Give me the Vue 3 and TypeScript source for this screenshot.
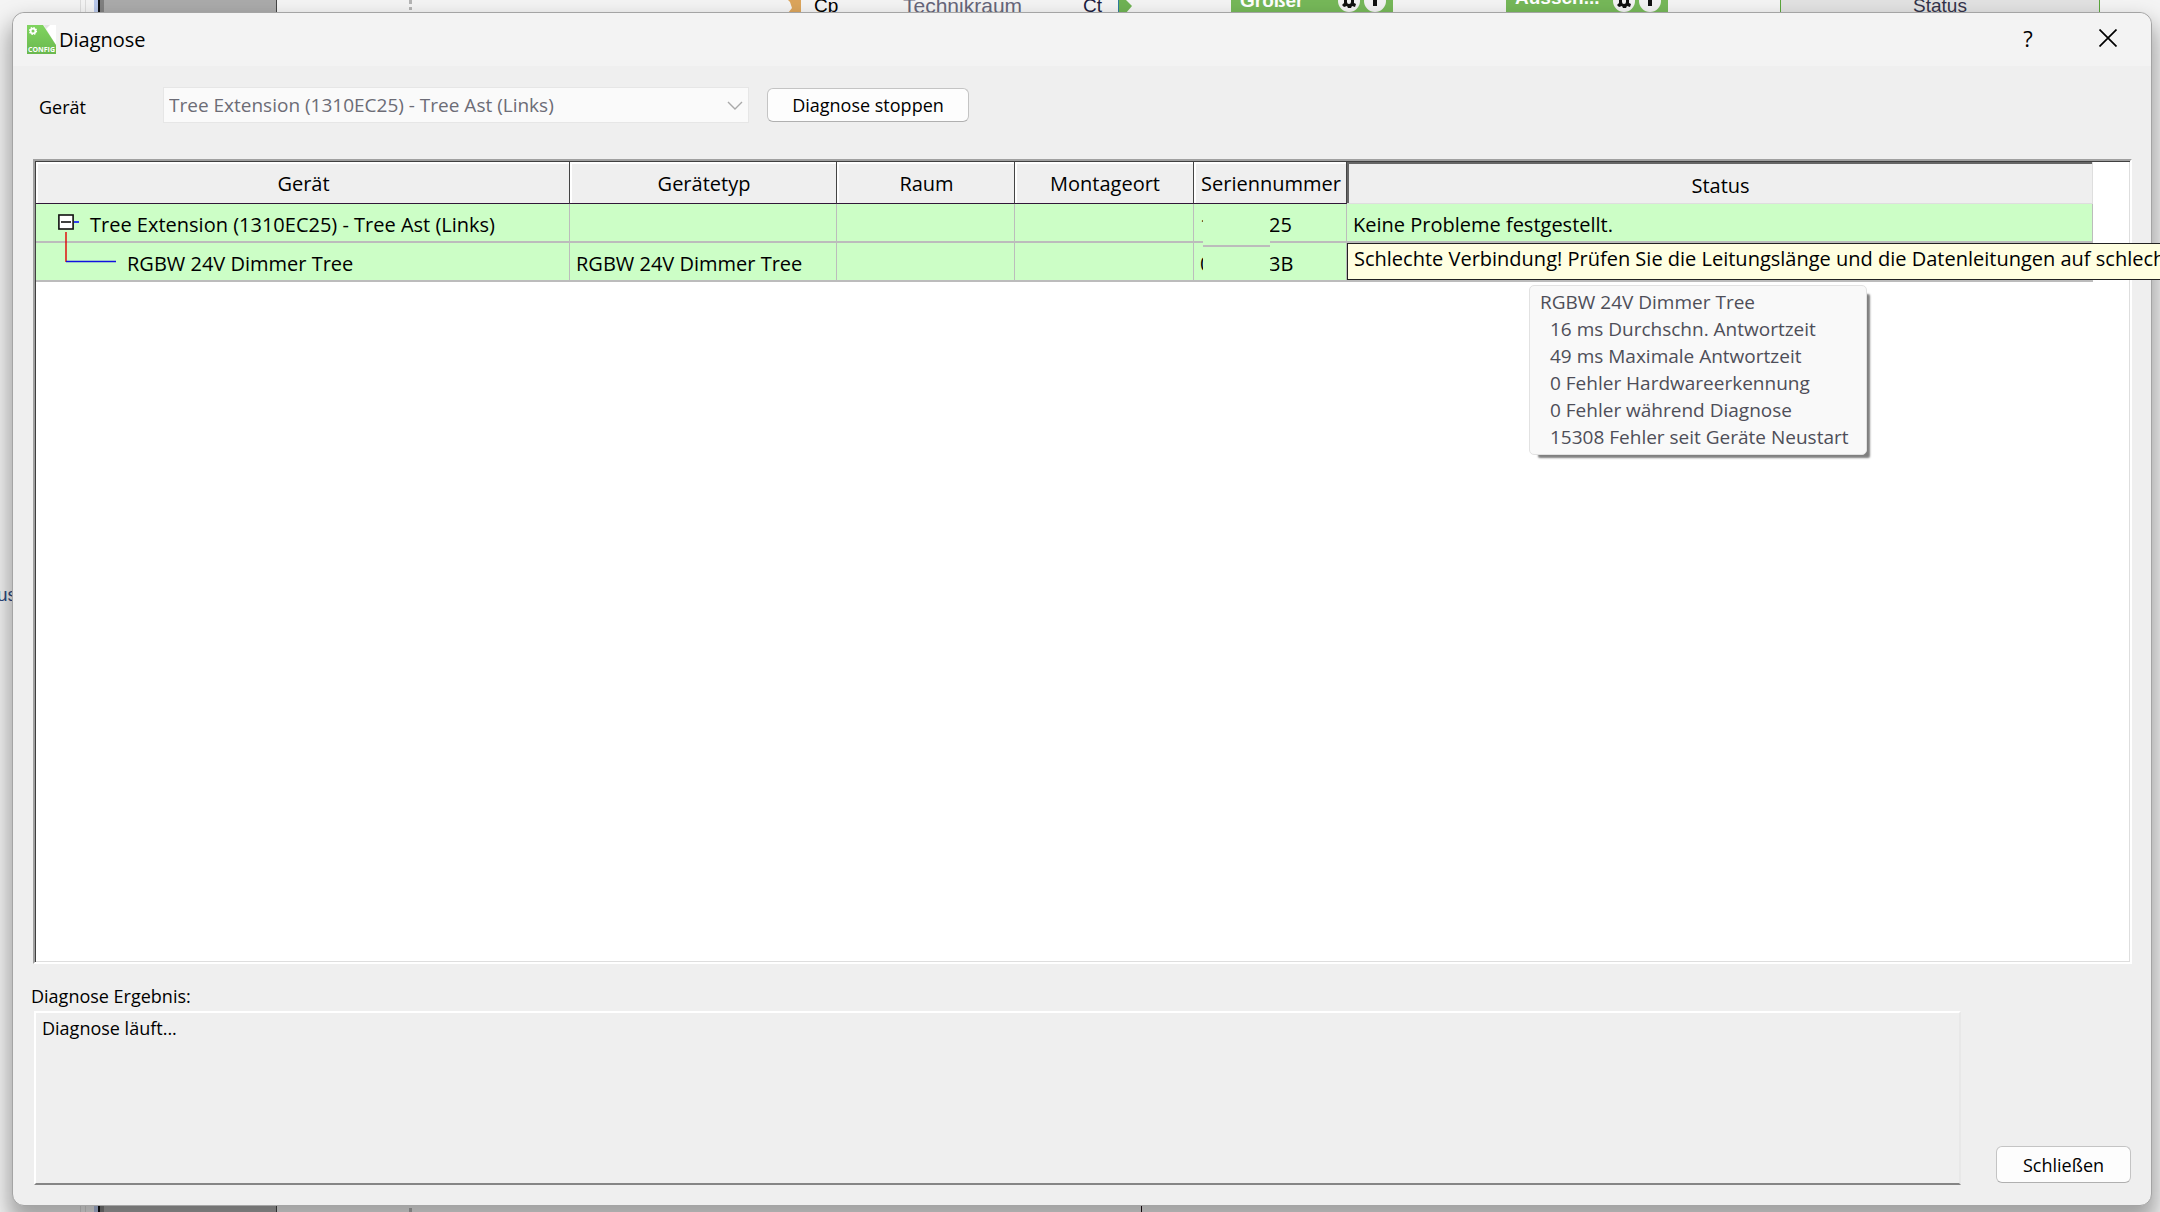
<script setup lang="ts">
import { ref } from 'vue'

interface DeviceRow {
  name: string
  type: string
  room: string
  place: string
  serialStart: string
  serialEnd: string
  status: string
}

const columns = ['Gerät', 'Gerätetyp', 'Raum', 'Montageort', 'Seriennummer', 'Status']
const device = ref('Tree Extension (1310EC25) - Tree Ast (Links)')
const result = ref('Diagnose läuft...')

const rows: DeviceRow[] = [
  {
    name: 'Tree Extension (1310EC25) - Tree Ast (Links)',
    type: '',
    room: '',
    place: '',
    serialStart: '1',
    serialEnd: '25',
    status: 'Keine Probleme festgestellt.',
  },
  {
    name: 'RGBW 24V Dimmer Tree',
    type: 'RGBW 24V Dimmer Tree',
    room: '',
    place: '',
    serialStart: '0',
    serialEnd: '3B',
    status: '',
  },
]

const hint = 'Schlechte Verbindung! Prüfen Sie die Leitungslänge und die Datenleitungen auf schlechte Kontakte.'
const details = [
  '16 ms Durchschn. Antwortzeit',
  '49 ms Maximale Antwortzeit',
  '0 Fehler Hardwareerkennung',
  '0 Fehler während Diagnose',
  '15308 Fehler seit Geräte Neustart',
]
const blocks = [
  { id: 'compare', label: 'Größer' },
  { id: 'switch', label: 'Aussch...' },
]
</script>

<template>
  <div class="desktop">
    <!-- Planning canvas behind the dialog -->
    <div class="canvas">
      <span class="line pane-edge"></span>
      <span class="line pane-blue"></span>
      <span class="sheet"></span>
      <span class="line dotted"></span>
      <span class="line wire"></span>
      <span class="side-word">us</span>
      <svg class="tag tag-in" viewBox="0 0 13 13"><path d="M0 0H13V13H0L4 8L2 2Z" fill="#dca55c" /></svg>
      <span class="word cp">Cp</span>
      <span class="word room">Technikraum</span>
      <span class="word ct">Ct</span>
      <svg class="tag tag-out" viewBox="0 0 14 13"><path d="M0 0H8L14 6L8 13H0Z" fill="#6fb353" /><path d="M0 0V13" stroke="#2f7d9c" stroke-width="2" /></svg>
      <div v-for="b in blocks" :key="b.id" class="block" :class="b.id">
        <span class="block-label">{{ b.label }}</span>
        <svg class="badges" viewBox="0 0 50 13">
          <circle cx="12" cy="1" r="11" fill="#f2f2f2" />
          <circle cx="38" cy="1" r="11" fill="#f2f2f2" />
          <path d="M7 0V3L5 5L7 7L10 6L11 8H14L15 6L18 7L19 4L17 3V0H14V2A2 2 0 0 1 10 2V0Z" fill="#111" />
          <path d="M36 0H40V6H36Z" fill="#111" />
        </svg>
      </div>
      <div class="status-block">Status</div>
    </div>

    <main class="dialog">
      <header class="titlebar">
        <svg class="logo" viewBox="0 0 29 29">
          <defs>
            <linearGradient id="leaf" x1="0" y1="0" x2="0" y2="1">
              <stop offset="0" stop-color="#80d45f" />
              <stop offset="1" stop-color="#6ab84f" />
            </linearGradient>
          </defs>
          <path d="M17 0H29V20Z" fill="#fff" />
          <path d="M17 0H23L19 4Z" fill="#e4e4e4" />
          <path d="M0 0H16L29 20V29H0Z" fill="url(#leaf)" />
          <circle cx="6" cy="6" r="2.4" fill="none" stroke="#fff" stroke-width="1.8" />
          <circle cx="6" cy="6" r="3.4" fill="none" stroke="#fff" stroke-width="1.4" stroke-dasharray="1.4 1.27" />
          <text x="14.5" y="27" text-anchor="middle" class="logo-text">CONFIG</text>
        </svg>
        <h1>Diagnose</h1>
        <button type="button" class="caption-btn" aria-label="Hilfe">?</button>
        <button type="button" class="caption-btn close" aria-label="Fenster schließen">
          <svg viewBox="0 0 18 18" width="18" height="18"><path d="M0.5 0.5L17.5 17.5M17.5 0.5L0.5 17.5" stroke="#000" stroke-width="1.7" /></svg>
        </button>
      </header>

      <div class="toolbar">
        <label for="device">Gerät</label>
        <div class="combo">
          <select id="device" v-model="device" disabled>
            <option>{{ device }}</option>
          </select>
          <svg viewBox="0 0 16 9" width="16" height="9"><path d="M1 1L8 8L15 1" fill="none" stroke="#a9a9a9" stroke-width="1.4" /></svg>
        </div>
        <button type="button" class="btn stop">Diagnose stoppen</button>
      </div>

      <section class="list">
        <table>
          <colgroup>
            <col class="c-name" /><col class="c-type" /><col class="c-room" /><col class="c-place" /><col class="c-serial" /><col />
          </colgroup>
          <thead>
            <tr>
              <th v-for="c in columns" :key="c" :class="{ pressed: c === 'Status' }">{{ c }}</th>
            </tr>
          </thead>
          <tbody>
            <tr v-for="(r, i) in rows" :key="r.name">
              <td :class="i === 0 ? 'root' : 'child'">
                {{ r.name }}
                <svg v-if="i === 0" class="branch" viewBox="0 0 60 60">
                  <path d="M16 18H21" stroke="#00f" stroke-width="1.5" />
                  <rect x="0.9" y="11" width="14.2" height="14" fill="#fff" stroke="#111" stroke-width="1.6" />
                  <path d="M3 18H13" stroke="#111" stroke-width="1.6" />
                  <path d="M8 28V58" stroke="#e00000" stroke-width="1.4" />
                  <path d="M8 57.5H58" stroke="#1010e0" stroke-width="1.4" />
                </svg>
              </td>
              <td>{{ r.type }}</td>
              <td>{{ r.room }}</td>
              <td>{{ r.place }}</td>
              <td class="serial">
                <span class="start">{{ r.serialStart }}</span><span>{{ r.serialEnd }}</span>
                <i v-if="i === 0" class="patch"></i>
              </td>
              <td class="status">
                {{ r.status }}
                <div v-if="i === 1" class="hint">{{ hint }}</div>
                <div v-if="i === 1" class="tip" role="tooltip">
                  <p>RGBW 24V Dimmer Tree</p>
                  <p v-for="d in details" :key="d" class="detail">{{ d }}</p>
                </div>
              </td>
            </tr>
          </tbody>
        </table>
      </section>

      <label class="result-label" for="result">Diagnose Ergebnis:</label>
      <footer class="bottom">
        <textarea id="result" v-model="result" readonly></textarea>
        <button type="button" class="btn done">Schließen</button>
      </footer>
    </main>
  </div>
</template>

<style>
body {
  margin: 0;
}
</style>

<style scoped>
* {
  box-sizing: border-box;
}
.desktop {
  position: relative;
  display: flex;
  min-height: 100vh;
  padding: 12px 8px 6px 12px;
  overflow: hidden;
  background: #f4f4f4;
  font-family: "Open Sans", "Noto Sans", sans-serif;
  color: #000;
}

.canvas {
  position: absolute;
  inset: 0;
  overflow: hidden;
  font: 19px/20px "Liberation Sans", Arial, sans-serif;
}
.canvas > * {
  position: absolute;
}
.line {
  top: 0;
  bottom: 0;
}
.pane-edge {
  left: 80px;
  width: 6px;
  border: 1px solid #dcdcdc;
  border-width: 0 1px;
}
.pane-blue {
  left: 94px;
  width: 4px;
  background: #b9c8ea;
}
.sheet {
  top: 0;
  bottom: 0;
  left: 98px;
  width: 179px;
  background: #ababab;
  border-left: 2px solid #111;
  border-right: 1px solid #444;
  box-shadow: inset 4px 0 #808080;
}
.dotted {
  left: 409px;
  border-left: 3px dotted #b4b4b4;
}
.wire {
  top: 50%;
  left: 1141px;
  width: 1px;
  background: #1c0a12;
}
.side-word {
  top: 585px;
  left: -3px;
  color: #2c4a80;
}
.word {
  top: -4px;
}
.tag {
  top: 0;
  height: 13px;
}
.tag-in {
  left: 788px;
  width: 13px;
}
.tag-out {
  left: 1118px;
  width: 14px;
}
.cp {
  left: 814px;
}
.room {
  left: 903px;
  font-size: 21px;
  color: #66667a;
}
.ct {
  left: 1083px;
  color: #1c1c40;
}
.block {
  top: 0;
  display: flex;
  justify-content: space-between;
  width: 162px;
  height: 16px;
  padding: 0 6px 0 9px;
  background: #76b859;
  color: #fff;
  font-weight: bold;
}
.block-label {
  margin-top: -9px;
}
.badges {
  width: 50px;
  height: 13px;
}
.compare {
  left: 1231px;
}
.switch {
  left: 1506px;
}
.switch .block-label {
  margin-top: -12px;
}
.status-block {
  top: 0;
  left: 1780px;
  width: 320px;
  height: 16px;
  border: 1px solid #5aa63c;
  border-width: 0 1px;
  background: #e2e2e2;
  line-height: 12px;
  text-align: center;
  color: #33334a;
}

.dialog {
  position: relative;
  display: flex;
  flex: 1;
  flex-direction: column;
  min-width: 0;
  border: 1px solid #a4a4a4;
  border-radius: 12px;
  background: #efefef;
  box-shadow: 0 14px 22px 4px rgba(0, 0, 0, 0.34);
}
.titlebar {
  display: flex;
  align-items: center;
  height: 53px;
  padding: 0 11px 0 14px;
  border-radius: 12px 12px 0 0;
  background: #f3f3f3;
}
.logo {
  width: 29px;
  height: 29px;
}
.logo-text {
  font: bold 7px "Open Sans", sans-serif;
  fill: #fff;
}
h1 {
  flex: 1;
  margin: 0 0 0 3px;
  font-size: 20px;
  font-weight: 400;
  line-height: 28px;
}
.caption-btn {
  width: 64px;
  height: 44px;
  margin: 0 0 4px;
  padding: 0;
  border: 0;
  background: none;
  font: 22px/28px "Open Sans", sans-serif;
}
.close {
  display: flex;
  align-items: center;
  justify-content: center;
  margin-left: 16px;
}

.toolbar {
  display: flex;
  align-items: center;
  height: 36px;
  margin: 21px 20px 36px 26px;
}
.toolbar label {
  width: 124px;
  padding-top: 4px;
  font-size: 18px;
  line-height: 24px;
}
.combo {
  position: relative;
  width: 586px;
  margin-right: 18px;
}
.combo select {
  display: block;
  width: 100%;
  height: 36px;
  padding: 0 28px 0 5px;
  border: 1px solid #e6e6e6;
  border-radius: 0;
  background: #fafafa;
  appearance: none;
  font: 19px/28px "Open Sans", sans-serif;
  color: #6c6c76;
  opacity: 1;
}
.combo svg {
  position: absolute;
  top: 14px;
  right: 6px;
}
.btn {
  height: 34px;
  padding: 0;
  border: 1px solid #c4c4c4;
  border-bottom-color: #b0b0b0;
  border-radius: 6px;
  background: #fdfdfd;
  font: 18px/24px "Open Sans", sans-serif;
  color: #000;
}
.stop {
  width: 202px;
}

.list {
  flex: 1;
  min-height: 300px;
  margin: 0 19px 0 20px;
  padding: 1px 38px 0 0;
  border: 2px solid #a0a0a0;
  border-right-color: #fff;
  border-bottom-color: #fff;
  background: #fff;
  box-shadow: inset 1px 1px #404040, inset -1px -1px #dedede;
}
table {
  width: 100%;
  margin-left: 1px;
  border-collapse: separate;
  border-spacing: 0;
  table-layout: fixed;
  font-size: 20px;
  line-height: 28px;
}
.c-name {
  width: 534px;
}
.c-type {
  width: 267px;
}
.c-room {
  width: 178px;
}
.c-place {
  width: 179px;
}
.c-serial {
  width: 153px;
}
th {
  height: 42px;
  padding: 2px 0 0 2px;
  border-right: 1px solid #444;
  border-bottom: 1px solid #301838;
  background: #efefef;
  box-shadow: inset 2px 2px #fff;
  font-weight: 400;
  white-space: nowrap;
}
th.pressed {
  padding-top: 6px;
  border-right-color: #dedede;
  border-bottom-color: #dedede;
  box-shadow: inset 2px 2px #666;
}
td {
  position: relative;
  height: 39px;
  padding: 5px 0 0 6px;
  border-right: 1px solid #bcbcbc;
  border-bottom: 2px solid #bcbcbc;
  background: #ccfec6;
  white-space: nowrap;
}
.root {
  padding-left: 54px;
}
.child {
  padding-left: 91px;
}
.branch {
  position: absolute;
  z-index: 1;
  top: 0;
  left: 22px;
  width: 60px;
  height: 60px;
}
.serial .start {
  display: inline-block;
  width: 69px;
}
/* Covers the middle digits of both serial numbers */
.patch {
  position: absolute;
  z-index: 1;
  top: 8px;
  left: 9px;
  width: 67px;
  height: 62px;
  background: linear-gradient(#bcbcbc, #bcbcbc) 0 33px / 100% 2px no-repeat #ccfec6;
}
.hint {
  position: absolute;
  z-index: 2;
  top: 0;
  left: 0;
  height: 37px;
  padding: 0 8px 0 6px;
  border: 1px solid #222;
  background: #ffffe1;
  line-height: 30px;
}
.tip {
  position: absolute;
  z-index: 2;
  top: 42px;
  left: 182px;
  width: 338px;
  padding: 3px 10px;
  border: 1px solid #e2e2e2;
  border-radius: 5px;
  background: #f9f9f9;
  box-shadow: 6px 6px 2px -3px rgba(0, 0, 0, 0.5);
  font-size: 19px;
  line-height: 27px;
  color: #4e4e58;
}
.tip p {
  margin: 0;
}
.tip .detail {
  padding-left: 10px;
}

.result-label {
  margin: 19px 0 0 18px;
  font-size: 18px;
  line-height: 26px;
}
.bottom {
  display: flex;
  align-items: flex-end;
  justify-content: space-between;
  gap: 35px;
  margin: 2px 20px 20px 21px;
}
textarea {
  flex: 1;
  height: 174px;
  padding: 2px 6px;
  border: 2px solid #fff;
  border-right-color: #e8e8e8;
  border-bottom-color: #858585;
  border-radius: 0;
  outline: 0;
  background: #efefef;
  resize: none;
  font: 18px/26px "Open Sans", sans-serif;
  color: #000;
}
.done {
  width: 135px;
  height: 37px;
  margin-bottom: 2px;
}
</style>
